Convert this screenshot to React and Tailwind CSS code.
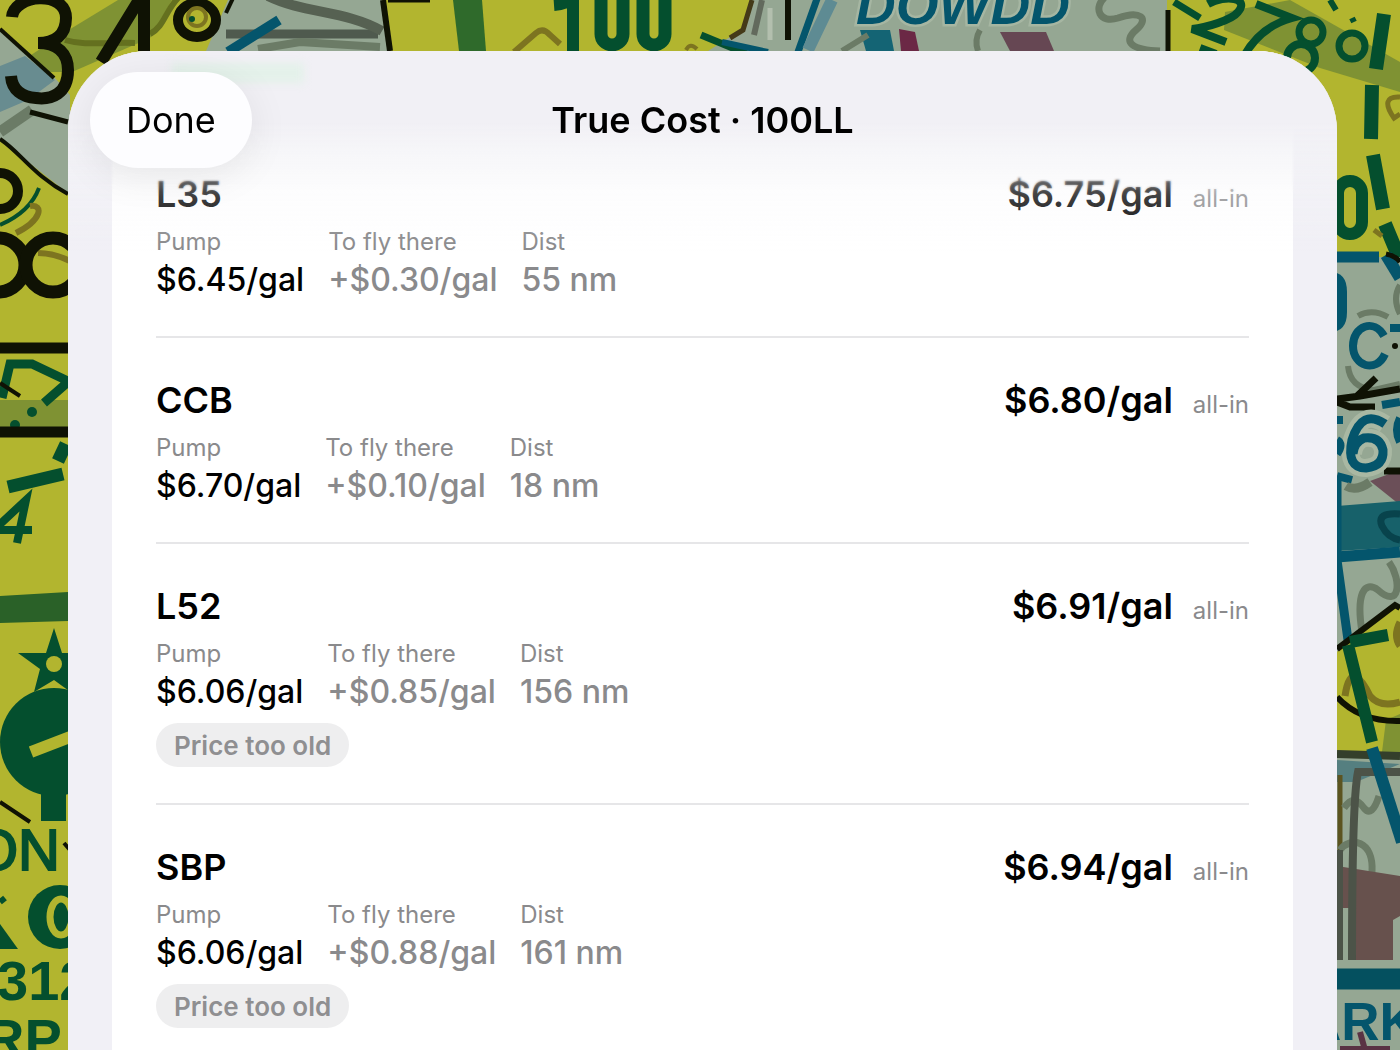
const stations = [
  { id: "L35", total: "$6.75/gal", pump: "$6.45/gal", fly: "+$0.30/gal", dist: "55 nm" },
  { id: "CCB", total: "$6.80/gal", pump: "$6.70/gal", fly: "+$0.10/gal", dist: "18 nm" },
  { id: "L52", total: "$6.91/gal", pump: "$6.06/gal", fly: "+$0.85/gal", dist: "156 nm", stale: true },
  { id: "SBP", total: "$6.94/gal", pump: "$6.06/gal", fly: "+$0.88/gal", dist: "161 nm", stale: true },
];

const GREEN = "#044f2e";
const BLUE = "#04556c";
const INK = "#0f1204";
const LAND = "#95a793";
const YELLOW = "#b2b52f";
const OLIVE = "#7f9233";
const BROWN = "#7d7420";
const GRAY = "#6b7b66";

function ChartBackdrop() {
  return (
    <svg
      className="absolute inset-0 w-full h-full"
      viewBox="0 0 1400 1050"
      preserveAspectRatio="xMidYMid slice"
      fill="none"
      aria-hidden="true"
      fontFamily="'Liberation Sans', sans-serif"
    >
      <rect width="1400" height="1050" fill={YELLOW} />

      {/* top left */}
      <path d="M0 30L55 78L70 95V195L0 140Z" fill={LAND} />
      <path d="M0 66L25 56L55 80L28 100L0 112Z" fill="#688c90" />
      <path d="M0 132L32 110" stroke={GRAY} strokeWidth="11" />
      <path d="M28 57L72 28L118 0H172L150 38L72 72L50 72Z" fill={OLIVE} />
      <path d="M65 40C85 46 105 42 135 43M150 34C165 26 165 10 180 -4" stroke="#64701f" strokeWidth="6" />
      <path d="M0 29L54 78" stroke={INK} strokeWidth="4" />
      <path d="M12 17C14 -6 66 -10 66 18C66 36 54 43 38 43C58 43 68 54 68 70C68 94 51 100 36 98C22 97 12 90 11 76" stroke={INK} strokeWidth="12" />
      <path d="M139 0L101 62M144 0V51" stroke={INK} strokeWidth="12" />
      <path d="M228 0H382L388 51H206Z" fill={LAND} />
      <path d="M226 34H378" stroke="#4f5a4e" strokeWidth="9" />
      <path d="M268 -4C305 14 345 10 382 31" stroke="#566152" strokeWidth="10" />
      <path d="M258 49L300 42L380 47" stroke={GRAY} strokeWidth="8" />
      <path d="M279 20L228 52" stroke={BLUE} strokeWidth="10" />
      <path d="M234 -4L226 13" stroke={INK} strokeWidth="4" />
      <ellipse cx="197" cy="20" rx="19" ry="17" stroke={INK} strokeWidth="10" />
      <circle cx="197" cy="17" r="9" stroke={BROWN} strokeWidth="4" />
      <circle cx="192" cy="19" r="3" fill={GREEN} />
      <path d="M383 0L390 51" stroke={INK} strokeWidth="6" />

      {/* top middle */}
      <path d="M388 0H430" stroke={INK} strokeWidth="5" />
      <path d="M453 0H482L486 51H459Z" fill="#2f6a2b" />
      <path d="M514 52L536 33Q543 27 550 35L560 44" stroke={BROWN} strokeWidth="6" />
      <path d="M554 5Q568 4 573 -4V51" stroke={GREEN} strokeWidth="12" />
      <rect x="601" y="-30" width="22" height="75" rx="11" stroke={GREEN} strokeWidth="13" />
      <rect x="643" y="-30" width="22" height="75" rx="11" stroke={GREEN} strokeWidth="13" />
      <path d="M686 50Q690 42 697 49" stroke={BROWN} strokeWidth="4" />
      <path d="M752 0H1167V51H708L744 28Z" fill={LAND} />
      <path d="M752 0L743 30L730 38" stroke="#443a18" strokeWidth="5" />
      <path d="M762 0L754 35" stroke="#626a5d" strokeWidth="6" />
      <path d="M770 8V40" stroke="#b3bfae" strokeWidth="5" />
      <path d="M701 35L752 56" stroke={GREEN} strokeWidth="7" />
      <path d="M722 42L768 52" stroke={BLUE} strokeWidth="6" />
      <path d="M788 -2V40" stroke={INK} strokeWidth="6" />
      <path d="M818 -4L798 52" stroke={BLUE} strokeWidth="7" />
      <path d="M832 0L808 50" stroke="#5e8b93" strokeWidth="12" />
      <path d="M860 30H890L894 51H866Z" fill="#146474" />
      <path d="M899 29L915 32L919 51H901Z" fill="#6b2845" />
      <path d="M1000 32H1046L1054 51H1010Z" fill="#664753" />
      <path d="M842 51L868 35M980 30Q974 40 978 51" stroke={GRAY} strokeWidth="6" />
      <path d="M1106 -4C1092 8 1100 24 1118 18C1140 10 1150 18 1136 30C1122 42 1132 50 1160 51" stroke={GRAY} strokeWidth="7" />
      <text x="856" y="24" fontSize="55" fontStyle="italic" fontWeight="700" fill={BLUE} stroke="#a6b6a2" strokeWidth="5" paintOrder="stroke">
        DOWDD
      </text>
      <path d="M1168 10V51" stroke={INK} strokeWidth="5" />

      {/* top right */}
      <path d="M1225 12L1290 0L1400 62V92L1320 68L1224 30Z" fill={OLIVE} />
      <path d="M1174 2L1200 18" stroke={GREEN} strokeWidth="7" />
      <path d="M1208 4C1226 -6 1250 -2 1238 12C1232 20 1205 28 1192 29L1226 42" stroke={GREEN} strokeWidth="8" />
      <path d="M1256 4L1292 18C1270 24 1254 38 1244 56M1200 48L1216 54" stroke={GREEN} strokeWidth="8" />
      <circle cx="1311" cy="32" r="12" stroke={GREEN} strokeWidth="7" />
      <circle cx="1301" cy="58" r="14" stroke={GREEN} strokeWidth="8" />
      <circle cx="1352" cy="46" r="13" stroke={GREEN} strokeWidth="7" />
      <path d="M1330 0L1336 10M1352 18L1354 22" stroke={GREEN} strokeWidth="6" />
      <path d="M1384 14L1376 69M1372 85L1371 139M1373 155L1383 209M1385 224L1400 260" stroke={GREEN} strokeWidth="14" />
      <path d="M1400 97C1386 96 1384 104 1394 118L1400 114M1374 230L1382 236" stroke={BROWN} strokeWidth="5" />
      <rect x="1338" y="181" width="24" height="53" rx="12" stroke={GREEN} strokeWidth="12" />

      {/* right edge */}
      <path d="M1330 257H1400V606L1337 652Z" fill={LAND} />
      <path d="M1330 257H1379" stroke={BLUE} strokeWidth="11" />
      <path d="M1386 255L1400 278" stroke={BLUE} strokeWidth="12" />
      <path d="M1386 254Q1396 256 1400 262" stroke={INK} strokeWidth="5" />
      <path d="M1400 285Q1392 298 1400 314M1358 316Q1372 308 1388 317M1348 366Q1350 388 1374 390L1400 384" stroke={GRAY} strokeWidth="6" />
      <path d="M1330 272Q1347 272 1347 292V312Q1347 332 1330 332Z" fill={BLUE} />
      <path d="M1384 336C1374 318 1353 326 1353 346C1353 366 1376 374 1385 354M1390 328H1400" stroke={BLUE} strokeWidth="8" />
      <circle cx="1395" cy="346" r="3" fill={INK} />
      <path d="M1330 400L1360 396L1400 389M1356 397L1376 378M1337 402L1350 407H1375" stroke={INK} strokeWidth="7" />
      <path d="M1370 481L1400 470V505Z" fill="#6b4f58" />
      <path d="M1384 471H1400" stroke={INK} strokeWidth="7" />
      <path d="M1385 424Q1362 408 1352 440Q1346 468 1366 468Q1384 466 1383 450Q1380 436 1364 438Q1354 442 1353 454" stroke="#a9b8a3" strokeWidth="18" />
      <path d="M1385 424Q1362 408 1352 440Q1346 468 1366 468Q1384 466 1383 450Q1380 436 1364 438Q1354 442 1353 454" stroke={BLUE} strokeWidth="9" />
      <path d="M1337 420H1343M1337 440Q1344 444 1337 454M1337 476L1352 480M1400 418Q1394 430 1400 442M1382 405L1400 402" stroke={BLUE} strokeWidth="8" />
      <path d="M1346 486Q1356 492 1370 482" stroke={GRAY} strokeWidth="9" />
      <path d="M1337 506L1400 501V547L1337 551Z" fill="#17616a" />
      <path d="M1400 514Q1376 512 1382 526Q1388 538 1400 540" stroke="#08434c" strokeWidth="7" />
      <path d="M1337 557L1400 552" stroke={BLUE} strokeWidth="11" />
      <path d="M1362 632C1356 594 1364 580 1378 590C1400 610 1402 580 1389 562" stroke={GRAY} strokeWidth="7" />
      <path d="M1337 480V560L1348 640" stroke={BLUE} strokeWidth="9" />
      <path d="M1337 652L1394 606L1400 608V752H1337Z" fill={YELLOW} />
      <path d="M1345 696C1350 662 1362 680 1370 696Q1380 708 1400 702M1400 622Q1393 636 1400 646" stroke={BROWN} strokeWidth="7" />
      <path d="M1386 720L1400 714V752H1382Z" fill={OLIVE} />
      <path d="M1337 649L1395 605L1400 608M1337 697Q1360 722 1400 721" stroke={INK} strokeWidth="6" />
      <path d="M1350 642L1388 635M1348 645L1372 742" stroke={GREEN} strokeWidth="12" />

      <path d="M1337 754L1400 752V1050H1337Z" fill={LAND} />
      <path d="M1337 760L1400 764L1356 782H1337Z" fill="#557f80" />
      <path d="M1337 754L1400 756" stroke="#343f2b" strokeWidth="8" />
      <path d="M1340 775V850" stroke="#5c5420" strokeWidth="5" />
      <path d="M1344 808C1352 796 1358 800 1364 808Q1372 818 1379 796M1340 850C1350 836 1374 840 1372 872" stroke={GRAY} strokeWidth="7" />
      <path d="M1337 866L1400 876V916L1393 920V960H1350V908H1337Z" fill="#67514d" />
      <path d="M1400 772H1358Q1352 800 1352 960M1339 850V960" stroke="#4c5348" strokeWidth="8" />
      <path d="M1372 748L1402 842" stroke={BLUE} strokeWidth="12" />
      <path d="M1337 979H1400" stroke="#04505f" strokeWidth="21" />
      <path d="M1360 1032L1365 1050M1340 1049H1390" stroke="#5a3344" strokeWidth="6" />
      <text x="1303" y="1040" fontSize="53" fontWeight="700" fill={BLUE}>
        ARK
      </text>

      {/* left edge */}
      <path d="M30 112L68 122" stroke={INK} strokeWidth="5" />
      <path d="M0 139C20 152 34 176 68 194" stroke={INK} strokeWidth="4" />
      <circle cx="0" cy="191" r="18" stroke={INK} strokeWidth="10" />
      <path d="M39 188Q30 212 0 225" stroke={GREEN} strokeWidth="4" />
      <path d="M30 206C44 204 42 220 16 233M38 253Q54 253 70 261" stroke={BROWN} strokeWidth="6" />
      <circle cx="-2" cy="265" r="27" stroke={INK} strokeWidth="13" />
      <circle cx="53" cy="265" r="27" stroke={INK} strokeWidth="13" />
      <path d="M0 400H68V428H0Z" fill={OLIVE} />
      <path d="M2 398L10 364L32 364L70 382M68 382L44 403" stroke={GREEN} strokeWidth="9" />
      <path d="M0 383L20 396" stroke={INK} strokeWidth="4" />
      <circle cx="32" cy="412" r="5" fill={GREEN} />
      <circle cx="15" cy="425" r="5" fill={GREEN} />
      <path d="M0 348H68M0 432H68" stroke={INK} strokeWidth="11" />
      <path d="M66 444L58 461M8 487L63 474" stroke={GREEN} strokeWidth="13" />
      <path d="M-2 526L26 500L17 543M0 530H32" stroke={GREEN} strokeWidth="8" />
      <path d="M0 596L68 592V621L0 623Z" fill="#2a6128" />
      <path d="M54 628L62 653H88L68 669L76 696L54 680L34 692L40 669L18 653H46Z" fill={GREEN} />
      <circle cx="54" cy="664" r="8" fill={YELLOW} />
      <circle cx="54" cy="742" r="54" fill={GREEN} />
      <path d="M31 752L70 737" stroke={YELLOW} strokeWidth="12" />
      <path d="M41 790H66V821H41Z" fill={GREEN} />
      <path d="M0 802L30 822M64 843L70 850" stroke={INK} strokeWidth="4" />
      <text x="-27" y="870" fontSize="58" fill={GREEN} stroke={GREEN} strokeWidth="2">
        ON
      </text>
      <path d="M0 902L5 898" stroke={GREEN} strokeWidth="6" />
      <path d="M0 924L18 949H0Z" fill={GREEN} />
      <ellipse cx="60" cy="917" rx="32" ry="32" fill={GREEN} />
      <ellipse cx="61" cy="917" rx="11" ry="18" stroke={YELLOW} strokeWidth="7" />
      <text x="-3" y="1000" fontSize="56" fontWeight="700" fill={GREEN}>
        312
      </text>
      <text x="-16" y="1058" fontSize="56" fontWeight="700" fill={GREEN}>
        RP
      </text>
    </svg>
  );
}

function Metric({ label, value, muted }) {
  return (
    <div>
      <dt className="h-7 leading-7 text-2xl text-[#8a8a8c]">{label}</dt>
      <dd className={`mt-1 h-10 leading-10 text-[32px] font-medium ${muted ? "text-[#8a8a8c]" : "text-black"}`}>
        {value}
      </dd>
    </div>
  );
}

function StationRow({ station }) {
  return (
    <li className="pt-[38px] pb-9 border-b-2 border-[#e6e6e8]">
      <div className="flex items-baseline justify-between">
        <h2 className="text-4xl leading-[48px] font-semibold">{station.id}</h2>
        <p className="flex items-baseline gap-5">
          <span className="text-4xl leading-[48px] font-semibold">{station.total}</span>
          <span className="text-2xl text-[#8a8a8c]">all-in</span>
        </p>
      </div>
      <dl className="flex flex-wrap gap-6 mt-2.5">
        <Metric label="Pump" value={station.pump} />
        <Metric label="To fly there" value={station.fly} muted />
        <Metric label="Dist" value={station.dist} muted />
      </dl>
      {station.stale && (
        <span className="flex items-center w-fit h-11 mt-[11px] px-[18px] rounded-full bg-[#eeeeef] text-[26px] font-semibold text-[#8f8f91]">
          Price too old
        </span>
      )}
    </li>
  );
}

export default function App() {
  return (
    <div className="relative h-screen overflow-hidden font-['Inter',sans-serif] text-black">
      <ChartBackdrop />
      <main className="relative h-full mt-[51px] ml-[68px] mr-[63px] overflow-hidden rounded-t-[80px] bg-[#f1f0f6]">
        <header className="absolute inset-x-0 top-0 z-10">
          <div className="absolute inset-x-0 top-0 h-[146px] backdrop-blur-[1px] mask-b-from-85% mask-b-to-100%"></div>
          <div className="absolute inset-x-0 top-0 h-[200px] bg-[linear-gradient(to_bottom,#f1f0f5_36%,#f2f2f6b0_50%,#f6f6f948_70%,#ffffff00)]"></div>
          {/* badge scrolled under the bar */}
          <div className="absolute left-[104px] top-3 w-[132px] h-5 bg-[#e4f1ea] blur-xs"></div>
          <div className="relative grid grid-cols-[1fr_auto_1fr] items-center pt-[21px] px-[22px]">
            <button
              type="button"
              className="justify-self-start h-24 px-9 rounded-full bg-[#fdfdff] text-4xl shadow-[0_8px_40px_rgba(0,0,0,0.08)]"
            >
              Done
            </button>
            <h1 className="text-4xl font-semibold">True Cost · 100LL</h1>
          </div>
        </header>
        <ul className="mx-11 px-11 pt-[81px] bg-white">
          {stations.map((station) => (
            <StationRow key={station.id} station={station} />
          ))}
        </ul>
      </main>
    </div>
  );
}
